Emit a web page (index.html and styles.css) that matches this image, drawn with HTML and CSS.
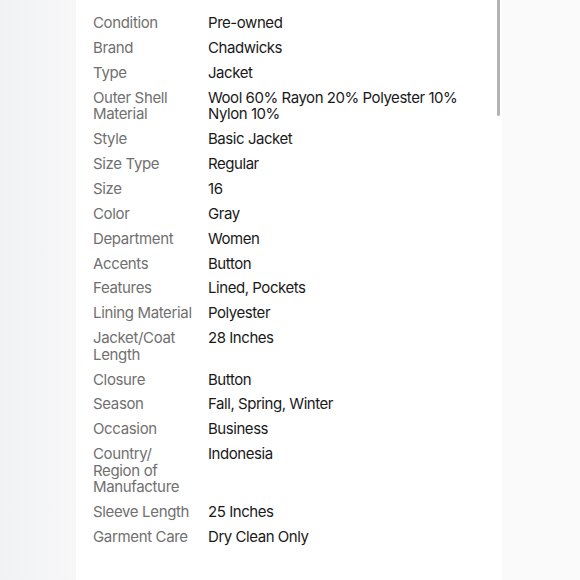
FILE: index.html
```html
<!DOCTYPE html>
<html lang="en">
<head>
<meta charset="utf-8">
<link rel="stylesheet" href="styles.css">
</head>
<body>
<div class="page">
  <div class="gutter-left"></div>
  <div class="panel">
    <div class="scrollbar"></div>
    <dl class="specs">
      <div class="row"><dt>Condition</dt><dd>Pre-owned</dd></div>
      <div class="row"><dt>Brand</dt><dd>Chadwicks</dd></div>
      <div class="row"><dt>Type</dt><dd>Jacket</dd></div>
      <div class="row"><dt>Outer Shell Material</dt><dd>Wool 60% Rayon 20% Polyester 10% Nylon 10%</dd></div>
      <div class="row"><dt>Style</dt><dd>Basic Jacket</dd></div>
      <div class="row"><dt>Size Type</dt><dd>Regular</dd></div>
      <div class="row"><dt>Size</dt><dd>16</dd></div>
      <div class="row"><dt>Color</dt><dd>Gray</dd></div>
      <div class="row"><dt>Department</dt><dd>Women</dd></div>
      <div class="row"><dt>Accents</dt><dd>Button</dd></div>
      <div class="row"><dt>Features</dt><dd>Lined, Pockets</dd></div>
      <div class="row"><dt>Lining Material</dt><dd>Polyester</dd></div>
      <div class="row"><dt>Jacket/Coat Length</dt><dd>28 Inches</dd></div>
      <div class="row"><dt>Closure</dt><dd>Button</dd></div>
      <div class="row"><dt>Season</dt><dd>Fall, Spring, Winter</dd></div>
      <div class="row"><dt>Occasion</dt><dd>Business</dd></div>
      <div class="row"><dt>Country/<wbr>Region of Manufacture</dt><dd>Indonesia</dd></div>
      <div class="row"><dt>Sleeve Length</dt><dd>25 Inches</dd></div>
      <div class="row"><dt>Garment Care</dt><dd>Dry Clean Only</dd></div>
    </dl>
  </div>
  <div class="gutter-right"></div>
</div>
</body>
</html>
```
FILE: styles.css
```css
html, body {
  margin: 0;
  padding: 0;
}
body {
  font-family: Inter, "Liberation Sans", sans-serif;
  background: #fafafa;
}
.page {
  display: flex;
  width: 580px;
  height: 580px;
  overflow: hidden;
}
.gutter-left {
  width: 76px;
  flex: none;
  background: linear-gradient(90deg, #f1f2f4 0%, #f7f7f8 100%);
}
.gutter-right {
  flex: 1;
  background: #fafafa;
}
.panel {
  position: relative;
  width: 426px;
  flex: none;
  background: #ffffff;
  padding: 15px 0 0 17px;
  box-sizing: border-box;
}
.scrollbar {
  position: absolute;
  top: 0;
  left: 421px;
  width: 3px;
  height: 116px;
  background: #b3b3b3;
  border-radius: 0 0 2px 2px;
}
.specs {
  margin: 0;
  display: flex;
  flex-direction: column;
  gap: 8.4px;
}
.row {
  display: grid;
  grid-template-columns: 105px 255px;
  column-gap: 10px;
  font-size: 15px;
  line-height: 16.5px;
  letter-spacing: -0.35px;
}
.row dt {
  color: #707070;
}
.row dd {
  margin: 0;
  color: #191919;
  letter-spacing: -0.45px;
}
```
